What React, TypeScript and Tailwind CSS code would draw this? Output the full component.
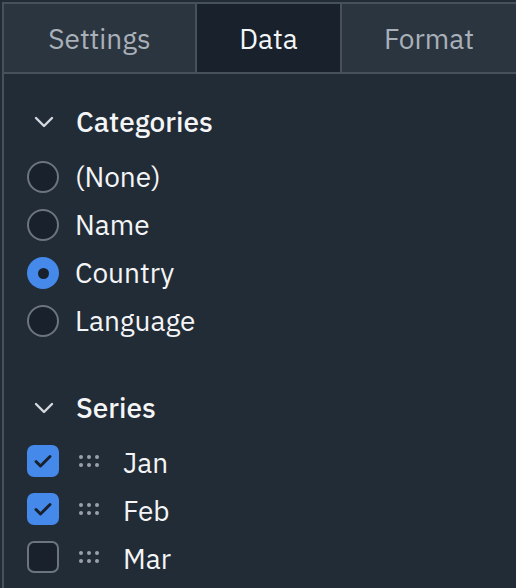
import React, { useState } from 'react';

const tabs = [
  { id: 'settings', label: 'Settings', width: 'w-[193px]' },
  { id: 'data', label: 'Data', width: 'w-[145px]' },
  { id: 'format', label: 'Format', width: 'flex-1' },
];

const categories = ['(None)', 'Name', 'Country', 'Language'];
const seriesInit = [
  { name: 'Jan', checked: true },
  { name: 'Feb', checked: true },
  { name: 'Mar', checked: false },
];

function Chevron() {
  return (
    <svg width="20" height="12" viewBox="0 0 20 12" fill="none" className="shrink-0">
      <path d="M2 2l8 8 8-8" stroke="#d5d9de" strokeWidth="2.4" strokeLinecap="round" strokeLinejoin="round" />
    </svg>
  );
}

function DragDots() {
  return (
    <div className="grid grid-cols-3 gap-x-[4px] gap-y-[4px] w-[20px]">
      {[...Array(6)].map((_, i) => (
        <span key={i} className="block h-[4px] w-[4px] rounded-full bg-[#9aa1a9]" />
      ))}
    </div>
  );
}

export default function App() {
  const [tab, setTab] = useState('data');
  const [category, setCategory] = useState('Country');
  const [series, setSeries] = useState(seriesInit);

  return (
    <div
      className="w-[516px] h-[588px] overflow-hidden bg-[#222c36] pt-[2px] pl-[2px]"
      style={{ fontFamily: '"IBM Plex Sans", "Noto Sans", "Open Sans", sans-serif' }}
    >
      <div className="h-full border-t-2 border-l-2 border-[#46515b]">
        {/* Tabs */}
        <div className="flex h-[70px] border-b-2 border-[#46515b]">
          {tabs.map((t, i) => (
            <button
              key={t.id}
              onClick={() => setTab(t.id)}
              className={`${t.width} flex items-center justify-center pt-[1px] text-[28px] ${
                i < tabs.length - 1 ? 'border-r-2 border-[#46515b]' : ''
              } ${tab === t.id ? 'bg-[#19222c] text-[#f4f5f7]' : 'bg-[#2b3540] text-[#a9b0b8]'}`}
            >
              {t.label}
            </button>
          ))}
        </div>

        <div className="pl-[23px] pt-[24px] text-[28px] text-[#f4f5f7]">
          {/* Categories */}
          <div className="flex items-center h-[48px]">
            <div className="w-[33px] flex justify-center">
              <Chevron />
            </div>
            <span className="ml-[16px] font-medium">Categories</span>
          </div>
          <div className="mt-[7px]">
            {categories.map((c) => {
              const on = category === c;
              return (
                <div key={c} className="flex items-center h-[48px] cursor-pointer" onClick={() => setCategory(c)}>
                  {on ? (
                    <span className="h-[32px] w-[32px] rounded-full bg-[#4589ea] flex items-center justify-center">
                      <span className="h-[11px] w-[11px] rounded-full bg-[#19222c]" />
                    </span>
                  ) : (
                    <span className="h-[32px] w-[32px] rounded-full border-2 border-[#6c757e] bg-[#19222c]" />
                  )}
                  <span className="ml-[16px]">{c}</span>
                </div>
              );
            })}
          </div>

          {/* Series */}
          <div className="flex items-center h-[48px] mt-[39px]">
            <div className="w-[33px] flex justify-center">
              <Chevron />
            </div>
            <span className="ml-[16px] font-medium">Series</span>
          </div>
          <div className="mt-[5px]">
            {series.map((s, idx) => (
              <div key={s.name} className="flex items-center h-[48px]">
                <button
                  onClick={() =>
                    setSeries(series.map((x, j) => (j === idx ? { ...x, checked: !x.checked } : x)))
                  }
                  className={`h-[32px] w-[32px] rounded-[7px] flex items-center justify-center ${
                    s.checked ? 'bg-[#4589ea]' : 'border-2 border-[#6c757e] bg-[#19222c]'
                  }`}
                >
                  {s.checked && (
                    <svg width="20" height="16" viewBox="0 0 20 16" fill="none">
                      <path d="M3 8.5l4.5 4.5L17 3.5" stroke="#19222c" strokeWidth="3" strokeLinecap="round" strokeLinejoin="round" />
                    </svg>
                  )}
                </button>
                <div className="ml-[20px]">
                  <DragDots />
                </div>
                <span className="ml-[24px] mt-[4px]">{s.name}</span>
              </div>
            ))}
          </div>
        </div>
      </div>
    </div>
  );
}
